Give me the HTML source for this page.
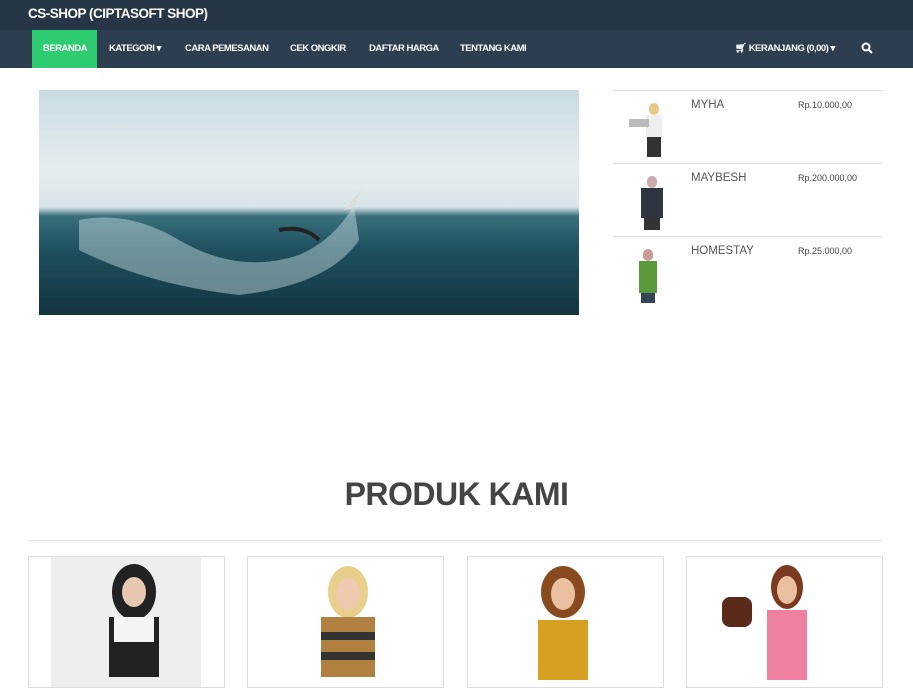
<!DOCTYPE html><html><head><style>
body{margin:0;width:913px;height:672px;overflow:hidden;font-family:"Liberation Sans",sans-serif;background:#fff;position:relative}
.top{position:absolute;left:0;top:0;width:913px;height:30px;background:#263646}
.top span{position:absolute;left:28px;top:6px;color:#fff;font-weight:bold;font-size:13.5px;letter-spacing:-0.5px}
.nav{position:absolute;left:0;top:30px;width:913px;height:38px;background:#2c3e50}
.nav a{position:absolute;top:13px;color:#fff;font-size:9.5px;font-weight:bold;letter-spacing:-0.5px;text-decoration:none}
.act{position:absolute;left:32px;top:0;width:65px;height:38px;background:#2ecc71}
.hero{position:absolute;left:39px;top:90px;width:540px;height:225px;background:linear-gradient(#c9dbe2 0%,#e4eef0 35%,#d8e5e8 52%,#3a6f7c 56%,#1f5160 70%,#12343f 100%);overflow:hidden}
.row{position:absolute;left:613px;width:269px;border-top:1px solid #ddd;height:72px}
.row .n{position:absolute;left:78px;top:8px;font-size:11.5px;color:#555}
.row .p{position:absolute;left:185px;top:9px;font-size:9px;color:#444}
.row .img{position:absolute;left:16px;top:10px;width:48px;height:56px}
h2{position:absolute;left:0;width:913px;top:476px;margin:0;text-align:center;font-size:32px;color:#444;font-weight:bold;letter-spacing:-0.5px}
.hr{position:absolute;left:28px;top:540px;width:854px;height:1px;background:#e6e6e6}
.card{position:absolute;top:556px;width:195px;height:130px;border:1px solid #ddd;overflow:hidden}
</style></head><body>
<div class="top"><span>CS-SHOP (CIPTASOFT SHOP)</span></div>
<div class="nav"><div class="act"></div>
<a style="left:43px">BERANDA</a><a style="left:109px">KATEGORI ▾</a><a style="left:185px">CARA PEMESANAN</a><a style="left:290px">CEK ONGKIR</a><a style="left:369px">DAFTAR HARGA</a><a style="left:460px">TENTANG KAMI</a>
<a style="left:735px">🛒︎ KERANJANG (0,00) ▾</a>
<svg style="position:absolute;left:861px;top:12px" width="12" height="12"><circle cx="5" cy="5" r="3.5" fill="none" stroke="#fff" stroke-width="2"/><path d="M7.5 7.5L11 11" stroke="#fff" stroke-width="2"/></svg>
</div>
<div class="hero"><svg width="540" height="225"><path d="M40 130 Q90 120 140 150 Q200 185 260 165 Q295 150 315 115 L320 150 Q290 195 200 205 Q110 195 40 160Z" fill="#cfe2e6" opacity="0.45"/><path d="M305 120 L322 100 L315 118Z" fill="#ddd"/><path d="M240 140 Q265 135 280 150" stroke="#222" stroke-width="4" fill="none"/></svg></div>
<div class="row" style="top:90px"><div class="img"><svg width="48" height="56"><rect x="20" y="2" width="10" height="12" rx="5" fill="#e8c98a"/><rect x="17" y="14" width="16" height="22" fill="#eee"/><rect x="18" y="36" width="14" height="20" fill="#333"/><rect x="0" y="18" width="20" height="8" fill="#bbb"/></svg></div><div class="n">MYHA</div><div class="p">Rp.10.000,00</div></div>
<div class="row" style="top:163px"><div class="img"><svg width="48" height="56"><rect x="18" y="2" width="10" height="12" rx="5" fill="#caa"/><rect x="12" y="14" width="22" height="30" fill="#2e3440"/><rect x="15" y="44" width="16" height="12" fill="#333"/></svg></div><div class="n">MAYBESH</div><div class="p">Rp.200.000,00</div></div>
<div class="row" style="top:236px"><div class="img"><svg width="48" height="56"><rect x="14" y="2" width="10" height="12" rx="5" fill="#c99"/><rect x="10" y="14" width="18" height="32" fill="#5a9a3a"/><rect x="12" y="46" width="14" height="10" fill="#345"/></svg></div><div class="n">HOMESTAY</div><div class="p">Rp.25.000,00</div></div>
<h2>PRODUK KAMI</h2><div class="hr"></div>
<div class="card" style="left:28px"><div style="position:absolute;left:22px;top:0;width:150px;height:130px;background:#eee"></div><svg style="position:absolute;left:60px;top:5px" width="90" height="120"><ellipse cx="45" cy="30" rx="22" ry="28" fill="#222"/><ellipse cx="45" cy="30" rx="12" ry="15" fill="#e8c8b0"/><rect x="20" y="55" width="50" height="60" fill="#222"/><rect x="25" y="55" width="40" height="25" fill="#f4f4f4"/></svg></div>
<div class="card" style="left:247px"><svg style="position:absolute;left:45px;top:5px" width="110" height="120"><ellipse cx="55" cy="30" rx="20" ry="26" fill="#e9cf8c"/><ellipse cx="55" cy="32" rx="12" ry="16" fill="#eec9b0"/><rect x="28" y="55" width="54" height="60" fill="#b08040"/><rect x="28" y="70" width="54" height="8" fill="#333"/><rect x="28" y="90" width="54" height="8" fill="#333"/></svg></div>
<div class="card" style="left:467px"><svg style="position:absolute;left:55px;top:5px" width="110" height="120"><ellipse cx="40" cy="30" rx="22" ry="26" fill="#8a4a20"/><ellipse cx="40" cy="32" rx="12" ry="16" fill="#eac0a0"/><rect x="15" y="58" width="50" height="60" fill="#d8a020"/></svg></div>
<div class="card" style="left:686px"><svg style="position:absolute;left:35px;top:5px" width="120" height="120"><ellipse cx="65" cy="25" rx="16" ry="22" fill="#7a3a20"/><ellipse cx="65" cy="28" rx="10" ry="14" fill="#eac0a0"/><rect x="45" y="48" width="40" height="70" fill="#f080a0"/><rect x="0" y="35" width="30" height="30" rx="8" fill="#5a2a1a"/></svg></div>
</body></html>
